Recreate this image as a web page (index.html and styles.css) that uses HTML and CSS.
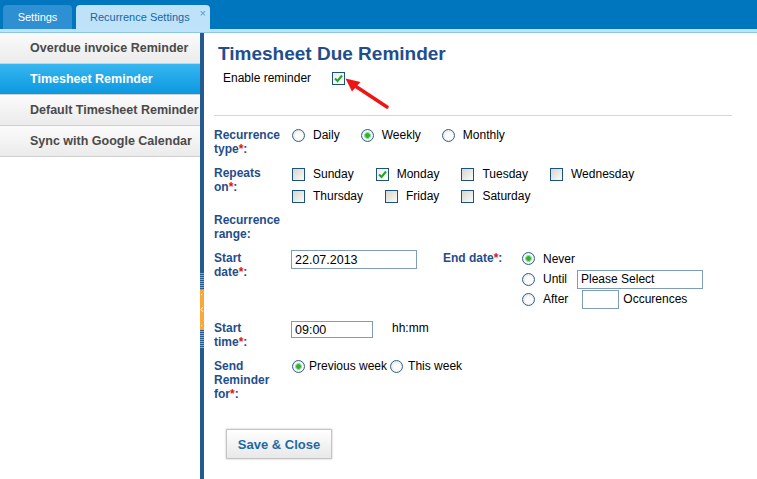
FILE: index.html
```html
<!DOCTYPE html>
<html>
<head>
<meta charset="utf-8">
<link rel="stylesheet" href="styles.css">
</head>
<body>
<div class="app">
  <header class="topbar">
    <div class="tab tab-settings">Settings</div>
    <div class="tab tab-active">Recurrence Settings<span class="close">×</span></div>
  </header>
  <div class="substrip"></div>
  <div class="main">
    <nav class="sidebar">
      <div class="menu-item">Overdue invoice Reminder</div>
      <div class="menu-item selected">Timesheet Reminder</div>
      <div class="menu-item">Default Timesheet Reminder</div>
      <div class="menu-item">Sync with Google Calendar</div>
    </nav>
    <div class="divider">
      <div class="grip grip-top"></div>
      <div class="handle">
        <svg width="4" height="40" viewBox="0 0 4 40"><rect x="1" y="4" width="1" height="1" fill="#fff"/><path d="M3 17 L1 19.5 L3 22" stroke="#fff" stroke-width="1" fill="none"/><rect x="1" y="35" width="1" height="1" fill="#fff"/></svg>
      </div>
      <div class="grip grip-bottom"></div>
    </div>
    <section class="content">
      <h1 class="title">Timesheet Due Reminder</h1>
      <div class="enable">
        <span>Enable reminder</span>
        <span class="cb checked enable-cb"><svg width="11" height="11" viewBox="0 0 11 11"><path d="M2 5.5 L4.5 8 L9 2.5" stroke="#23a323" stroke-width="2" fill="none"/></svg></span>
      </div>
      <svg class="arrow" width="50" height="36" viewBox="0 0 50 36"><polygon points="3.5,3.5 18.5,7 10,16.5" fill="#ee1515"/><line x1="11" y1="9.5" x2="45" y2="32" stroke="#ee1515" stroke-width="3.5" stroke-linecap="round"/></svg>
      <hr class="sep">
      <div class="form">
        <div class="row h38">
          <div class="label">Recurrence<br>type<span class="req">*</span>:</div>
          <div class="opts radio-row">
            <span class="opt"><span class="rb"></span><span class="txt">Daily</span></span>
            <span class="opt"><span class="rb on"></span><span class="txt">Weekly</span></span>
            <span class="opt"><span class="rb"></span><span class="txt">Monthly</span></span>
          </div>
        </div>
        <div class="row h47">
          <div class="label">Repeats<br>on<span class="req">*</span>:</div>
          <div class="days">
            <div class="line">
              <span class="opt"><span class="cb"></span><span class="txt">Sunday</span></span>
              <span class="opt"><span class="cb checked"><svg width="11" height="11" viewBox="0 0 11 11"><path d="M2 5.5 L4.5 8 L9 2.5" stroke="#23a323" stroke-width="2" fill="none"/></svg></span><span class="txt">Monday</span></span>
              <span class="opt"><span class="cb"></span><span class="txt">Tuesday</span></span>
              <span class="opt"><span class="cb"></span><span class="txt">Wednesday</span></span>
            </div>
            <div class="line">
              <span class="opt"><span class="cb"></span><span class="txt">Thursday</span></span>
              <span class="opt"><span class="cb"></span><span class="txt">Friday</span></span>
              <span class="opt"><span class="cb"></span><span class="txt">Saturday</span></span>
            </div>
          </div>
        </div>
        <div class="row h38">
          <div class="label">Recurrence<br>range:</div>
        </div>
        <div class="row h70">
          <div class="label">Start<br>date<span class="req">*</span>:</div>
          <input class="field date-field" type="text" value="22.07.2013">
          <div class="end">
            <div class="end-label">End date<span class="req">*</span>:</div>
            <div class="end-opts">
              <div class="line first"><span class="rb on"></span><span class="txt">Never</span></div>
              <div class="line"><span class="rb"></span><span class="txt">Until</span><input class="field until-field" type="text" value="Please Select"></div>
              <div class="line"><span class="rb"></span><span class="txt">After</span><input class="field after-field" type="text" value=""><span class="occ">Occurences</span></div>
            </div>
          </div>
        </div>
        <div class="row h38">
          <div class="label">Start<br>time<span class="req">*</span>:</div>
          <input class="field time-field" type="text" value="09:00">
          <span class="hint">hh:mm</span>
        </div>
        <div class="row h71">
          <div class="label">Send<br>Reminder<br>for<span class="req">*</span>:</div>
          <div class="opts send-row">
            <span class="rb on"></span><span class="txt prev">Previous week</span>
            <span class="rb second"></span><span class="txt this">This week</span>
          </div>
        </div>
      </div>
      <button class="save">Save &amp; Close</button>
    </section>
  </div>
</div>
</body>
</html>
```

FILE: styles.css
```css
body {
  margin: 0;
  font-family: "Liberation Sans", Arial, sans-serif;
  font-size: 12px;
  color: #000;
  background: #fff;
}

.app {
  width: 757px;
  height: 479px;
  display: flex;
  flex-direction: column;
  overflow: hidden;
}

.topbar {
  height: 29px;
  box-sizing: border-box;
  background: #0076bf;
  display: flex;
  align-items: flex-end;
  padding-left: 3px;
  gap: 4px;
}

.tab {
  height: 24px;
  line-height: 25px;
  border-radius: 4px 4px 0 0;
  font-size: 11px;
  box-sizing: border-box;
}

.tab-settings {
  width: 69px;
  background: #2f8fd3;
  color: #fff;
  text-align: center;
}

.tab-active {
  width: 134px;
  padding-left: 14px;
  background: #bee3f9;
  color: #1767a6;
  position: relative;
}

.close {
  position: absolute;
  top: 3px;
  right: 4px;
  font-size: 11px;
  line-height: 10px;
  color: #5e95c6;
}

.substrip {
  height: 3px;
  background: #bfe4fa;
  border-bottom: 1px solid #8cc5ee;
}

.main {
  flex: 1;
  display: flex;
  min-height: 0;
}

.sidebar {
  width: 200px;
  flex: none;
  overflow: hidden;
}

.menu-item {
  height: 30px;
  line-height: 30px;
  border-bottom: 1px solid #d0d0d0;
  background: linear-gradient(#fbfbfb, #ebebeb);
  padding-left: 30px;
  font-weight: bold;
  font-size: 12.5px;
  color: #4a4a4a;
  white-space: nowrap;
}

.menu-item.selected {
  background: linear-gradient(#37b6f0, #0b98df);
  color: #fff;
}

.divider {
  width: 4px;
  flex: none;
  background: #245a8f;
  display: flex;
  flex-direction: column;
}

.grip {
  height: 18px;
  background: repeating-linear-gradient(#245a8f 0 1px, #7ba7d3 1px 2px);
}

.grip-top {
  margin-top: 239px;
}

.handle {
  height: 40px;
  background: #f9a93a;
  display: flex;
}

.content {
  flex: 1;
  position: relative;
  padding: 10px 0 0 10px;
}

.title {
  margin: 0 0 0 4px;
  font-size: 19px;
  line-height: 22px;
  font-weight: bold;
  color: #1f4e8c;
}

.enable {
  display: flex;
  align-items: center;
  height: 18px;
  margin: 4px 0 0 9px;
}

.enable-cb {
  margin-left: 21px;
}

.arrow {
  position: absolute;
  left: 138px;
  top: 42px;
}

.sep {
  width: 518px;
  height: 0;
  border: 0;
  border-top: 1px solid #d6d6d6;
  margin: 28px 0 12px 0;
}

.row {
  display: flex;
  align-items: flex-start;
}

.h38 { height: 38px; }
.h47 { height: 47px; }
.h70 { height: 70px; }
.h71 { height: 70px; }

.label {
  width: 78px;
  flex: none;
  font-weight: bold;
  color: #1f4e8c;
  line-height: 14px;
}

.req {
  color: #e41111;
}

.opts {
  display: flex;
  align-items: center;
  height: 14px;
}

.opt {
  display: flex;
  align-items: center;
}

.txt {
  margin-left: 8px;
  white-space: nowrap;
}

.radio-row .opt {
  margin-right: 21px;
}

.days {
  margin-top: -3px;
}

.days .line {
  display: flex;
  align-items: center;
  height: 22px;
}

.days .opt {
  margin-right: 22px;
}

.rb {
  width: 13px;
  height: 13px;
  flex: none;
  box-sizing: border-box;
  border: 1px solid #31608e;
  border-radius: 50%;
  background: radial-gradient(circle at 55% 55%, #fdfdfd 35%, #d3d3ca 100%);
}

.rb.on {
  background: radial-gradient(circle, #32b032 0 2px, #9edb9e 2.6px 3.2px, #fdfdfd 3.8px, #fdfdfd 35%, #d3d3ca 100%);
}

.cb {
  width: 13px;
  height: 13px;
  flex: none;
  box-sizing: border-box;
  border: 1px solid #1c5180;
  background: linear-gradient(135deg, #d6d6ce, #fbfbf9);
  display: flex;
  align-items: center;
  justify-content: center;
}

.cb.checked {
  background: linear-gradient(135deg, #eeeeea, #fff);
}

.field {
  box-sizing: border-box;
  border: 1px solid #7f9db9;
  height: 19px;
  font-family: "Liberation Sans", Arial, sans-serif;
  font-size: 12.5px;
  line-height: 17px;
  padding: 0 3px;
  margin: 0;
  color: #000;
  background: #fff;
  outline: none;
}

.date-field {
  width: 126px;
  margin: -1px 0 0 -1px;
}

.end {
  display: flex;
  margin-left: 26px;
}

.end-label {
  width: 79px;
  flex: none;
  font-weight: bold;
  color: #1f4e8c;
  line-height: 14px;
}

.end-opts {
  margin-top: -3px;
}

.end-opts .line {
  display: flex;
  align-items: center;
  height: 20px;
}

.end-opts .line.first {
  height: 21px;
}

.until-field {
  width: 126px;
  margin-left: 10px;
  font-size: 12px;
}

.after-field {
  width: 37px;
  margin-left: 14px;
}

.occ {
  margin-left: 4px;
}

.time-field {
  width: 82px;
  height: 17px;
  line-height: 15px;
  margin-left: -1px;
}

.hint {
  margin-left: 19px;
  line-height: 14px;
}

.send-row .prev {
  margin-left: 4px;
}

.send-row .second {
  margin-left: 3px;
}

.send-row .this {
  margin-left: 5px;
}

.save {
  margin-left: 12px;
  width: 106px;
  height: 30px;
  border: 1px solid #c4c4c4;
  background: linear-gradient(#ffffff, #e8e8e8);
  box-shadow: 0 0 2px rgba(0, 0, 0, 0.25);
  font-family: "Liberation Sans", Arial, sans-serif;
  font-weight: bold;
  font-size: 13px;
  color: #1f68a6;
  padding: 0;
}
```
